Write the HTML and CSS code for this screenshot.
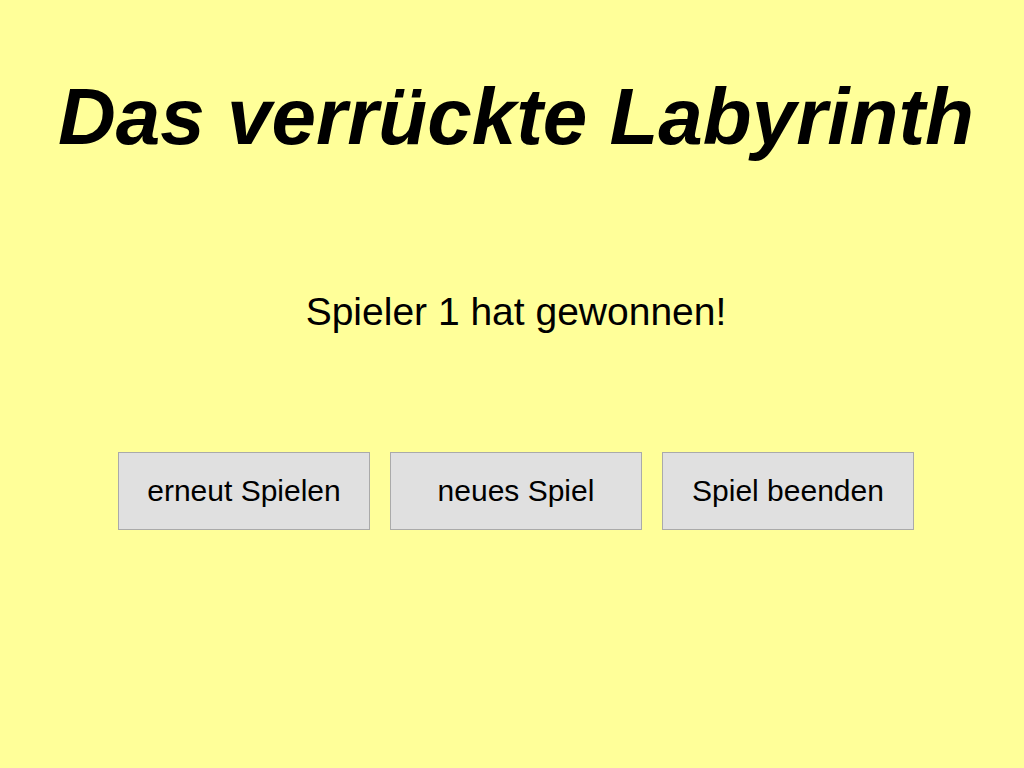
FILE: index.html
```html
<!DOCTYPE html>
<html lang="de">
<head>
<meta charset="utf-8">
<title>Das verrückte Labyrinth</title>
<link rel="stylesheet" href="styles.css">
</head>
<body>
<main class="screen">
  <h1 class="title">Das verrückte Labyrinth</h1>
  <p class="message">Spieler 1 hat gewonnen!</p>
  <div class="actions">
    <button class="btn" type="button">erneut Spielen</button>
    <button class="btn" type="button">neues Spiel</button>
    <button class="btn" type="button">Spiel beenden</button>
  </div>
</main>
</body>
</html>
```
FILE: styles.css
```css
html, body {
  margin: 0;
  padding: 0;
  background: #ffff99;
}
.screen {
  width: 1024px;
  height: 768px;
  display: flex;
  flex-direction: column;
  align-items: center;
  padding-left: 8px;
  box-sizing: border-box;
  font-family: "Liberation Sans", Arial, sans-serif;
  color: #000;
}
.title {
  margin: 72px 0 0 0;
  font-size: 80px;
  line-height: 90px;
  font-weight: bold;
  font-style: italic;
  white-space: nowrap;
}
.message {
  margin: 128px 0 0 0;
  font-size: 39px;
  line-height: 44px;
}
.actions {
  margin-top: 118px;
  display: flex;
  gap: 20px;
}
.btn {
  width: 252px;
  height: 78px;
  background: #e0e0e0;
  border: 1px solid #aaaaaa;
  border-radius: 0;
  font-family: "Liberation Sans", Arial, sans-serif;
  font-size: 30px;
  color: #000;
  padding: 0;
}
```
